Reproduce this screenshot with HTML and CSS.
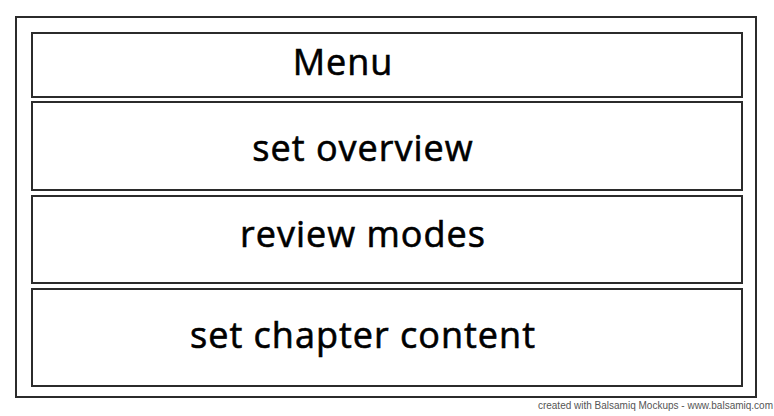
FILE: index.html
```html
<!DOCTYPE html>
<html>
<head>
<meta charset="utf-8">
<link rel="stylesheet" href="styles.css">
</head>
<body>
<div class="page">
  <div class="frame">
    <div class="item item-menu"><span class="label">Menu</span></div>
    <div class="item item-overview"><span class="label">set overview</span></div>
    <div class="item item-review"><span class="label">review modes</span></div>
    <div class="item item-chapter"><span class="label">set chapter content</span></div>
  </div>
  <div class="credit">created with Balsamiq Mockups - www.balsamiq.com</div>
</div>
</body>
</html>
```
FILE: styles.css
```css
html, body {
  margin: 0;
  padding: 0;
  background: #ffffff;
}

.page {
  width: 774px;
  height: 416px;
  padding: 16px 0 0 15px;
  box-sizing: border-box;
  display: flex;
  flex-direction: column;
}

.frame {
  width: 742px;
  height: 382px;
  box-sizing: border-box;
  border: 2px solid #2b2b2b;
  padding: 14px 12px 9px 14px;
  display: flex;
  flex-direction: column;
  gap: 4px;
}

.item {
  box-sizing: border-box;
  border: 2px solid #2b2b2b;
  display: flex;
  align-items: center;
  justify-content: center;
  padding-right: 48px;
  font-family: "Open Sans", sans-serif;
  font-weight: 400;
  font-size: 36px;
  letter-spacing: 1px;
  -webkit-text-stroke: 0.6px #000;
  color: #000;
  line-height: 1;
}

.item-menu {
  height: 66px;
  margin-bottom: -1px;
  padding-right: 88px;
  padding-bottom: 6px;
}

.item-overview {
  height: 90px;
  padding-top: 3px;
}

.item-review {
  height: 89px;
  padding-bottom: 11px;
}

.item-chapter {
  height: 99px;
  padding-bottom: 6px;
}

.credit {
  align-self: flex-end;
  margin-top: 2px;
  margin-right: 1px;
  font-family: "Liberation Sans", sans-serif;
  font-size: 10px;
  color: #555;
}
```
